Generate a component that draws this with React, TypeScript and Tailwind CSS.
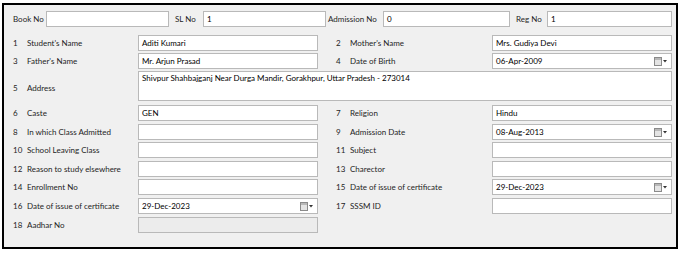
import React from 'react';

const font = { fontFamily: 'Lato, "Open Sans", sans-serif' };

const DateIcon: React.FC = () => (
  <span className="ml-auto mr-[4px] flex items-center gap-[1px]">
    <svg width="8" height="9" viewBox="0 0 8 9">
      <rect x="0.5" y="0.5" width="7" height="8" fill="#e4e4e4" stroke="#8a8a8a" />
      <rect x="1" y="1" width="6" height="2" fill="#b8b8b8" />
    </svg>
    <svg width="4" height="3" viewBox="0 0 4 3">
      <path d="M0 0 L4 0 L2 2.5 Z" fill="#333" />
    </svg>
  </span>
);

interface BoxProps {
  value?: string;
  w: string;
  date?: boolean;
  disabled?: boolean;
  tall?: boolean;
}

const Box: React.FC<BoxProps> = ({ value = '', w, date, disabled, tall }) => (
  <div
    className={`${w} ${tall ? 'h-[30px] items-start pt-[2px]' : 'h-[16px] items-center'} flex shrink-0 border border-[#b9b9b9] ${
      disabled ? 'bg-[#ececec]' : 'bg-white'
    } pl-[3px] text-[8px] leading-none text-black`}
  >
    <span className="whitespace-nowrap">{value}</span>
    {date && <DateIcon />}
  </div>
);

interface FieldProps {
  no: number;
  label: string;
  value?: string;
  date?: boolean;
  disabled?: boolean;
  right?: boolean;
}

const Field: React.FC<FieldProps> = ({ no, label, value, date, disabled, right }) => (
  <div className={`flex items-center ${right ? 'ml-[18px]' : ''}`}>
    <span className="w-[14px] shrink-0">{no}</span>
    <span className={`${right ? 'w-[142px]' : 'w-[111px]'} shrink-0 whitespace-nowrap`}>{label}</span>
    <Box w="w-[180px]" value={value} date={date} disabled={disabled} />
  </div>
);

const Row: React.FC<{ mt: string; children: React.ReactNode }> = ({ mt, children }) => (
  <div className={`flex items-center ${mt}`}>{children}</div>
);

export default function App() {
  return (
    <div className="bg-white w-[685px] h-[254px] pt-[3px] pl-[2px]" style={font}>
      <div className="w-[676px] h-[246px] border-2 border-black bg-[#f0f0f0] pl-[9px] pt-[6px] text-[8px] text-[#1e1e1e]">
        <Row mt="mt-0">
          <span className="w-[33px] shrink-0 whitespace-nowrap">Book No</span>
          <Box w="w-[123px]" />
          <span className="ml-[6px] w-[28px] shrink-0 whitespace-nowrap">SL No</span>
          <Box w="w-[123px]" value="1" />
          <span className="ml-[2px] w-[55px] shrink-0 whitespace-nowrap">Admission No</span>
          <Box w="w-[127px]" value="0" />
          <span className="ml-[6px] w-[31px] shrink-0 whitespace-nowrap">Reg No</span>
          <Box w="w-[125px]" value="1" />
        </Row>

        <Row mt="mt-[8px]">
          <Field no={1} label="Student's Name" value="Aditi Kumari" />
          <Field no={2} label="Mother's Name" value="Mrs. Gudiya Devi" right />
        </Row>
        <Row mt="mt-[2px]">
          <Field no={3} label="Father's Name" value="Mr. Arjun Prasad" />
          <Field no={4} label="Date of Birth" value="06-Apr-2009" date right />
        </Row>
        <Row mt="mt-[2px]">
          <span className="w-[14px] shrink-0 mt-[3px]">5</span>
          <span className="w-[111px] shrink-0 mt-[3px]">Address</span>
          <Box
            w="w-[534px]"
            tall
            value="Shivpur Shahbajganj Near Durga Mandir, Gorakhpur, Uttar Pradesh - 273014"
          />
        </Row>
        <Row mt="mt-[4px]">
          <Field no={6} label="Caste" value="GEN" />
          <Field no={7} label="Religion" value="Hindu" right />
        </Row>
        <Row mt="mt-[3px]">
          <Field no={8} label="In which Class Admitted" />
          <Field no={9} label="Admission Date" value="08-Aug-2013" date right />
        </Row>
        <Row mt="mt-[2px]">
          <Field no={10} label="School Leaving Class" />
          <Field no={11} label="Subject" right />
        </Row>
        <Row mt="mt-[3px]">
          <Field no={12} label="Reason to study elsewhere" />
          <Field no={13} label="Charector" right />
        </Row>
        <Row mt="mt-[2px]">
          <Field no={14} label="Enrollment No" />
          <Field no={15} label="Date of issue of certificate" value="29-Dec-2023" date right />
        </Row>
        <Row mt="mt-[3px]">
          <Field no={16} label="Date of issue of certificate" value="29-Dec-2023" date />
          <Field no={17} label="SSSM ID" right />
        </Row>
        <Row mt="mt-[3px]">
          <Field no={18} label="Aadhar No" disabled />
        </Row>
      </div>
    </div>
  );
}
